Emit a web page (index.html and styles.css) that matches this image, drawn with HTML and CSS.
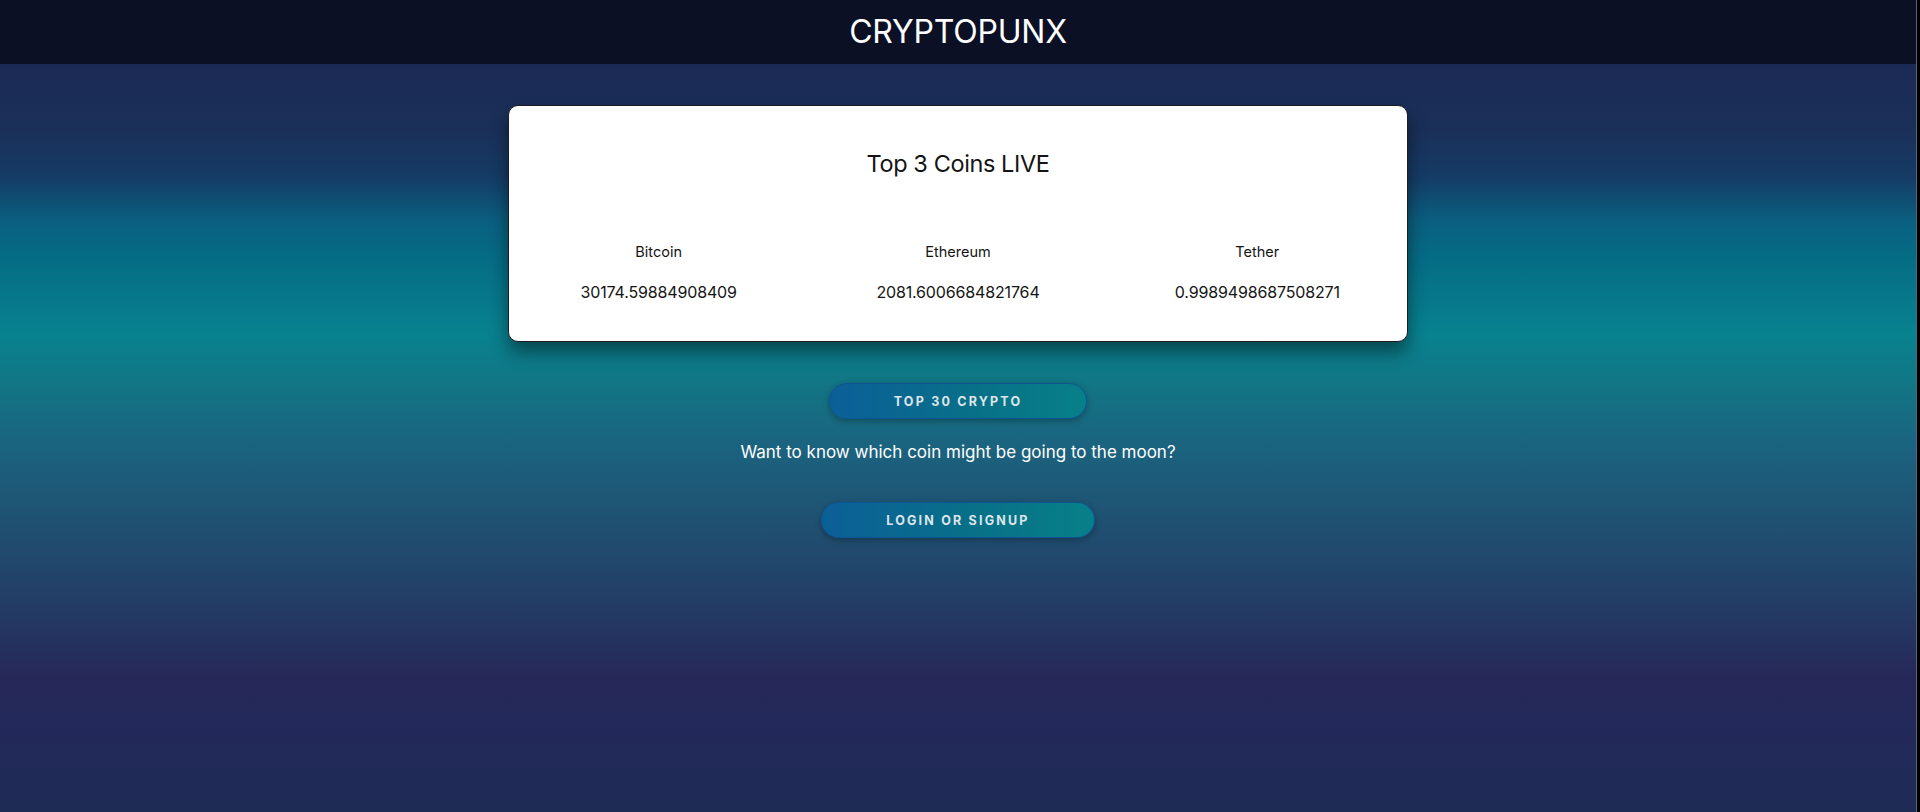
FILE: index.html
```html
<!DOCTYPE html>
<html lang="en">
<head>
<meta charset="utf-8">
<title>CRYPTOPUNX</title>
<link rel="stylesheet" href="styles.css">
</head>
<body>
<div class="frame">
  <div class="app">
    <header class="topbar">
      <h1 class="brand">CRYPTOPUNX</h1>
    </header>
    <main class="main">
      <section class="card">
        <h2 class="card-title">Top 3 Coins LIVE</h2>
        <div class="coins">
          <div class="coin">
            <div class="coin-name">Bitcoin</div>
            <div class="coin-price">30174.59884908409</div>
          </div>
          <div class="coin">
            <div class="coin-name">Ethereum</div>
            <div class="coin-price">2081.6006684821764</div>
          </div>
          <div class="coin">
            <div class="coin-name">Tether</div>
            <div class="coin-price">0.9989498687508271</div>
          </div>
        </div>
      </section>
      <button class="pill-btn btn-top">TOP 30 CRYPTO</button>
      <p class="tagline">Want to know which coin might be going to the moon?</p>
      <button class="pill-btn btn-login">LOGIN OR SIGNUP</button>
    </main>
  </div>
  <div class="edge"></div>
</div>
</body>
</html>
```

FILE: styles.css
```css
html, body {
  margin: 0;
  padding: 0;
  height: 100%;
  background: #000;
}

body {
  font-family: Inter, "Helvetica Neue", "Liberation Sans", sans-serif;
  overflow: hidden;
}

.frame {
  display: flex;
  height: 100vh;
}

.app {
  flex: 1;
  display: flex;
  flex-direction: column;
  min-width: 0;
  border-right: 1px solid #56657d;
}

.edge {
  width: 3px;
  background: #000;
}

.topbar {
  height: 64px;
  background: #0b1024;
  display: flex;
  align-items: center;
  justify-content: center;
  flex: none;
}

.brand {
  margin: 0;
  color: #ffffff;
  font-weight: 400;
  font-size: 32px;
  letter-spacing: -0.2px;
  line-height: 1;
}

.main {
  flex: 1;
  display: flex;
  flex-direction: column;
  align-items: center;
  background: linear-gradient(180deg,
    #1b2a55 0%,
    #1a3059 9%,
    #153b65 15%,
    #0a5f80 21%,
    #056c85 26%,
    #08828f 36%,
    #127584 43%,
    #1a6580 50%,
    #1f5373 60%,
    #233f67 71%,
    #262858 82%,
    #23295a 88%,
    #1e2b55 100%);
  padding-top: 41px;
}

.card {
  width: 898px;
  background: #fff;
  border: 1px solid #1c1c22;
  border-radius: 10px;
  box-shadow: 0 10px 18px rgba(0, 0, 0, 0.45);
  padding: 43px 0 39px;
  color: #141414;
}

.card-title {
  margin: 0;
  text-align: center;
  font-weight: 400;
  font-size: 23.5px;
  letter-spacing: -0.4px;
  line-height: 30px;
}

.coins {
  margin-top: 64px;
  display: grid;
  grid-template-columns: repeat(3, 1fr);
}

.coin {
  display: flex;
  flex-direction: column;
  align-items: center;
  gap: 21px;
}

.coin-name {
  font-size: 14.5px;
  line-height: 18px;
}

.coin-price {
  font-size: 16px;
  line-height: 20px;
  letter-spacing: -0.15px;
}

.pill-btn {
  font-family: Inter, "Helvetica Neue", "Liberation Sans", sans-serif;
  height: 36px;
  padding: 0 64px;
  border-radius: 18px;
  border: 1px solid #0d5592;
  background: linear-gradient(90deg, #0b5f98 0%, #087088 55%, #078088 100%);
  color: #dfe5ea;
  font-size: 12.5px;
  font-weight: 700;
  letter-spacing: 2.2px;
  box-shadow: 0 2px 6px rgba(0, 0, 0, 0.3);
  cursor: pointer;
}

.btn-top {
  margin-top: 41px;
}

.tagline {
  margin: 22px 0 0;
  color: #ffffff;
  font-size: 17px;
  line-height: 22px;
}

.btn-login {
  margin-top: 39px;
}
```
